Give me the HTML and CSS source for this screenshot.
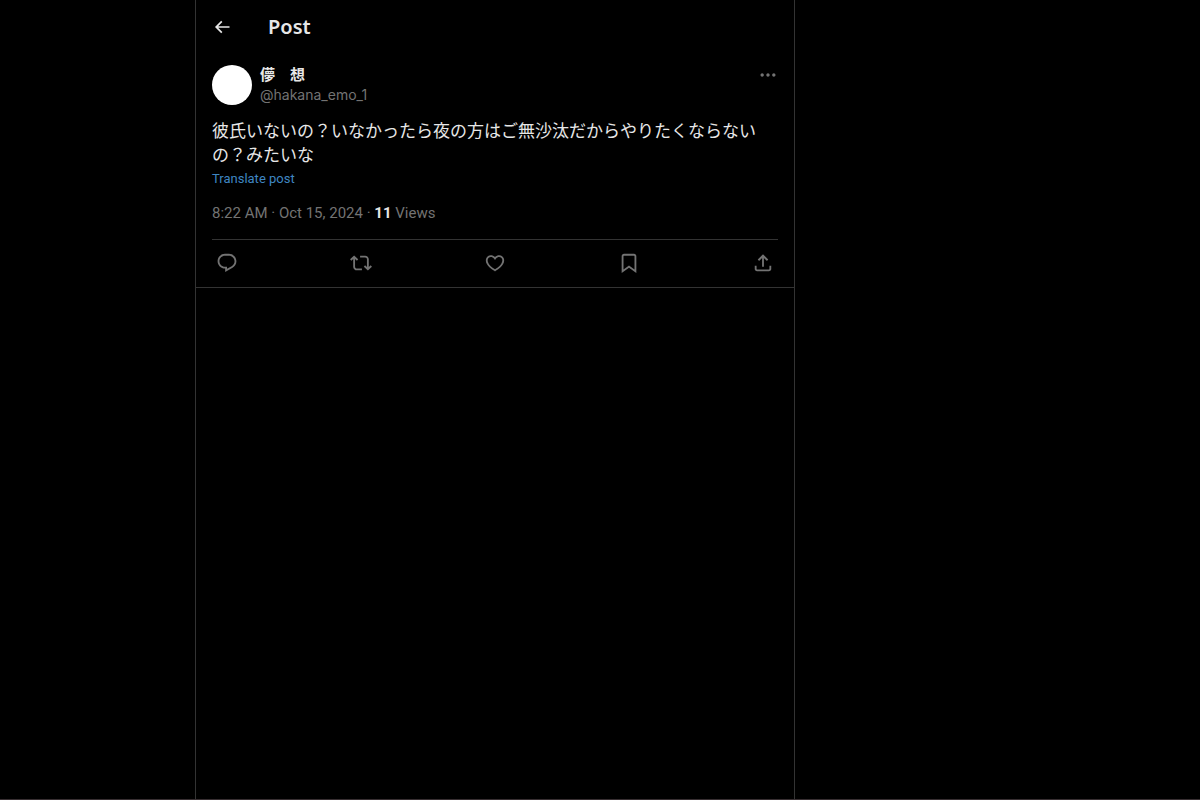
FILE: index.html
```html
<!DOCTYPE html>
<html lang="en">
<head>
    <meta charset="UTF-8">
    <meta name="viewport" content="width=device-width, initial-scale=1.0">
    <title>Post</title>
    <link rel="stylesheet" href="styles.css">
</head>
<body>
    <main class="column">
        <header class="header">
            <button class="back-btn" aria-label="Back">
                <svg viewBox="0 0 24 24"><path d="M7.414 13l5.043 5.04-1.414 1.42L3.586 12l7.457-7.46 1.414 1.42L7.414 11H21v2H7.414z"/></svg>
            </button>
            <h1>Post</h1>
        </header>

        <article class="post">
            <div class="author">
                <a href="#" class="avatar" aria-label="Profile"></a>
                <div class="names">
                    <a href="#" class="name" lang="ja">儚　想</a>
                    <a href="#" class="handle">@hakana_emo_1</a>
                </div>
                <button class="more-btn" aria-label="More">
                    <svg viewBox="0 0 24 24"><path d="M3 12c0-1.1.9-2 2-2s2 .9 2 2-.9 2-2 2-2-.9-2-2zm9 2c1.1 0 2-.9 2-2s-.9-2-2-2-2 .9-2 2 .9 2 2 2zm7 0c1.1 0 2-.9 2-2s-.9-2-2-2-2 .9-2 2 .9 2 2 2z"/></svg>
                </button>
            </div>

            <p class="text" lang="ja">彼氏いないの？いなかったら夜の方はご無沙汰だからやりたくならないの？みたいな</p>
            <button class="translate-btn">Translate post</button>

            <div class="meta">
                <a href="#">8:22 AM · Oct 15, 2024</a> · <strong>11</strong> Views
            </div>

            <div class="actions">
                <button aria-label="Reply">
                    <svg viewBox="0 0 24 24"><path d="M1.751 10c0-4.42 3.584-8 8.005-8h4.366c4.49 0 8.129 3.64 8.129 8.13 0 2.96-1.607 5.68-4.196 7.11l-8.054 4.46v-3.69h-.067c-4.49.1-8.183-3.51-8.183-8.01zm8.005-6c-3.317 0-6.005 2.69-6.005 6 0 3.37 2.77 6.08 6.138 6.01l.351-.01h1.761v2.3l5.087-2.81c1.951-1.08 3.163-3.13 3.163-5.36 0-3.39-2.744-6.13-6.129-6.13H9.756z"/></svg>
                </button>
                <button aria-label="Repost">
                    <svg viewBox="0 0 24 24"><path d="M4.5 3.88l4.432 4.14-1.364 1.46L5.5 7.55V16c0 1.1.896 2 2 2H13v2H7.5c-2.209 0-4-1.79-4-4V7.55L1.432 9.48.068 8.02 4.5 3.88zM16.5 6H11V4h5.5c2.209 0 4 1.79 4 4v8.45l2.068-1.93 1.364 1.46-4.432 4.14-4.432-4.14 1.364-1.46 2.068 1.93V8c0-1.1-.896-2-2-2z"/></svg>
                </button>
                <button aria-label="Like">
                    <svg viewBox="0 0 24 24"><path d="M16.697 5.5c-1.222-.06-2.679.51-3.89 2.16l-.805 1.09-.806-1.09C9.984 6.01 8.526 5.44 7.304 5.5c-1.243.07-2.349.78-2.91 1.91-.552 1.12-.633 2.78.479 4.82 1.074 1.97 3.257 4.27 7.129 6.61 3.87-2.34 6.052-4.64 7.126-6.61 1.111-2.04 1.03-3.7.477-4.82-.561-1.13-1.666-1.84-2.908-1.91zm4.187 7.69c-1.351 2.48-4.001 5.12-8.379 7.67l-.503.3-.504-.3c-4.379-2.55-7.029-5.19-8.382-7.67-1.36-2.5-1.41-4.86-.514-6.67.887-1.79 2.647-2.91 4.601-3.01 1.651-.09 3.368.56 4.798 2.01 1.429-1.45 3.146-2.1 4.796-2.01 1.954.1 3.714 1.22 4.601 3.01.896 1.81.846 4.17-.514 6.67z"/></svg>
                </button>
                <button aria-label="Bookmark">
                    <svg viewBox="0 0 24 24"><path d="M4 4.5C4 3.12 5.119 2 6.5 2h11C18.881 2 20 3.12 20 4.5v18.44l-8-5.71-8 5.71V4.5zM6.5 4c-.276 0-.5.22-.5.5v14.56l6-4.29 6 4.29V4.5c0-.28-.224-.5-.5-.5h-11z"/></svg>
                </button>
                <button aria-label="Share">
                    <svg viewBox="0 0 24 24"><path d="M12 2.59l5.7 5.7-1.41 1.42L13 6.41V16h-2V6.41l-3.3 3.3-1.41-1.42L12 2.59zM21 15l-.02 3.51c0 1.38-1.12 2.49-2.5 2.49H5.5C4.11 21 3 19.88 3 18.5V15h2v3.5c0 .28.22.5.5.5h12.98c.28 0 .5-.22.5-.5L19 15h2z"/></svg>
                </button>
            </div>
        </article>
    </main>
</body>
</html>
```
FILE: styles.css
```css
* {
    box-sizing: border-box;
    margin: 0;
    padding: 0;
}

body {
    display: grid;
    grid-template-columns: 13fr minmax(0, 600px) 27fr;
    min-height: 100vh;
    background: #000;
    border-bottom: 1px solid #382f32;
    color: #e7e7e7;
    font-family: Roboto, "Noto Sans CJK JP", sans-serif;
    font-size: 15px;
    line-height: 20px;
}

a {
    color: inherit;
    text-decoration: none;
}

a:hover {
    text-decoration: underline;
}

button {
    display: flex;
    align-items: center;
    justify-content: center;
    background: none;
    border: none;
    color: inherit;
    font-family: inherit;
    cursor: pointer;
}

svg {
    display: block;
    fill: currentColor;
}

.column {
    grid-column: 2;
    border-left: 1px solid #333;
    border-right: 1px solid #333;
}

.header {
    display: flex;
    align-items: center;
    gap: 36px;
    height: 53px;
    padding: 0 16px;
}

.back-btn svg {
    width: 20px;
    height: 20px;
}

h1 {
    font-family: "Noto Sans", sans-serif;
    font-size: 20px;
    font-weight: 600;
    line-height: 24px;
}

.post {
    padding: 12px 16px 0;
    border-bottom: 1px solid #333;
}

.author {
    display: flex;
    align-items: flex-start;
    gap: 8px;
}

.avatar {
    width: 40px;
    height: 40px;
    border-radius: 50%;
    background: #fff;
}

.names {
    display: flex;
    flex: 1;
    flex-direction: column;
}

.name {
    font-weight: bold;
}

.handle,
.meta,
.more-btn,
.actions {
    color: #737373;
}

.handle {
    font-family: Inter, sans-serif;
    font-size: 14px;
}

.more-btn {
    height: 20px;
}

.more-btn svg {
    width: 20px;
    height: 20px;
}

.text {
    margin-top: 14px;
    font-size: 17px;
    line-height: 24px;
}

.translate-btn {
    color: #3f86c2;
    font-size: 13px;
    line-height: 24px;
}

.meta {
    margin: 12px 0 16px;
}

.meta strong {
    color: #e7e7e7;
}

.actions {
    display: flex;
    justify-content: space-between;
    padding: 0 4px 1px;
    border-top: 1px solid #333;
}

.actions button {
    height: 46px;
}

.actions svg {
    width: 22px;
    height: 22px;
}
```
